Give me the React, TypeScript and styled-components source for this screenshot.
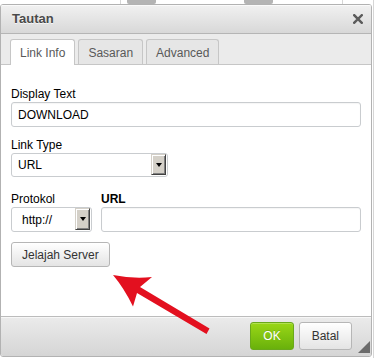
import React from "react";
import styled, { createGlobalStyle } from "styled-components";

const Global = createGlobalStyle`
  html, body { margin: 0; padding: 0; background: #fff; }
  body { font-family: "Liberation Sans", Arial, sans-serif; font-size: 12px; color: #000; }
  * { box-sizing: border-box; }
`;

const Page = styled.div`
  position: relative;
  width: 376px;
  height: 358px;
  overflow: hidden;
  background: #fff;
  padding-top: 4px;
`;

/* background page content peeking out behind the dialog */
const Backdrop = styled.div`
  position: absolute;
  inset: 0;
  z-index: 0;
`;

const BackBlock = styled.div<{ $x: number; $w: number }>`
  position: absolute;
  top: 0;
  left: ${(p) => p.$x}px;
  width: ${(p) => p.$w}px;
  height: 4px;
  background: #b4b4b4;
  border-radius: 0 0 2px 2px;
`;

const BackLine = styled.div<{ $x: number; $top: number; $h: number }>`
  position: absolute;
  left: ${(p) => p.$x}px;
  top: ${(p) => p.$top}px;
  width: 1px;
  height: ${(p) => p.$h}px;
  background: #d6d6d6;
`;

const Dialog = styled.div`
  position: relative;
  z-index: 1;
  width: 372px;
  height: 353px;
  border: 1px solid #b2b2b2;
  border-radius: 3px;
  display: flex;
  flex-direction: column;
  background: #fff;
  overflow: hidden;
`;

const TitleBar = styled.div`
  height: 29px;
  flex: none;
  display: flex;
  align-items: center;
  justify-content: space-between;
  padding: 0 8px 0 11px;
  background: linear-gradient(#f1f1f1, #d8d8d8);
  border-bottom: 1px solid #b5b5b5;
  box-shadow: inset 0 1px 0 #fafafa;
`;

const Title = styled.span`
  font-size: 13px;
  font-weight: bold;
  line-height: 28px;
  color: #4a4a4a;
  text-shadow: 0 1px 0 rgba(255, 255, 255, 0.75);
`;

const CloseIcon = styled.svg`
  width: 10px;
  height: 10px;
  display: block;
`;

const TabStrip = styled.div`
  height: 31px;
  flex: none;
  display: flex;
  align-items: flex-start;
  gap: 3px;
  padding: 5px 0 0 9px;
  background: #ebebeb;
  border-bottom: 1px solid #c6c6c6;
`;

const Tab = styled.div<{ $active?: boolean }>`
  position: relative;
  height: ${(p) => (p.$active ? 26 : 25)}px;
  padding: 2px 9px 0;
  line-height: 22px;
  font-size: 12px;
  color: #595959;
  border: 1px solid #c6c6c6;
  border-bottom: none;
  border-radius: 3px 3px 0 0;
  background: ${(p) => (p.$active ? "#fff" : "#e6e6e6")};
  z-index: ${(p) => (p.$active ? 2 : 1)};
`;

const Body = styled.div`
  flex: 1;
  padding: 21px 10px 0;
  background: #fff;
  border-bottom: 1px solid #bcbcbc;
  display: flex;
  flex-direction: column;
  align-items: flex-start;
`;

const Field = styled.div<{ $mt?: number; $w?: string; $grow?: boolean }>`
  margin-top: ${(p) => p.$mt ?? 0}px;
  width: ${(p) => p.$w ?? "100%"};
  flex: ${(p) => (p.$grow ? 1 : "none")};
  display: flex;
  flex-direction: column;
`;

const Label = styled.label<{ $bold?: boolean }>`
  display: block;
  font-size: 12px;
  line-height: 16px;
  color: #000;
  font-weight: ${(p) => (p.$bold ? "bold" : "normal")};
`;

const TextInput = styled.input`
  width: 100%;
  height: 25px;
  border: 1px solid #c9cccf;
  border-radius: 3px;
  padding: 0 6px;
  font-family: "Liberation Sans", Arial, sans-serif;
  font-size: 12px;
  color: #000;
  background: #fff;
  box-shadow: inset 0 1px 1px rgba(0, 0, 0, 0.04);
  outline: none;
`;

const SelectBox = styled.div<{ $w: number; $h: number; $indent: number }>`
  width: ${(p) => p.$w}px;
  height: ${(p) => p.$h}px;
  border: 1px solid #c9cccf;
  border-radius: 3px;
  background: #fff;
  display: flex;
  align-items: stretch;
  padding: 0 1px 0 ${(p) => p.$indent}px;
  font-size: 12px;
  color: #000;
`;

const SelectValue = styled.span`
  flex: 1;
  display: flex;
  align-items: center;
`;

const DropButton = styled.span`
  width: 15px;
  margin: 0 0 1px;
  display: flex;
  align-items: center;
  justify-content: center;
  background: #d4d0c8;
  border: 1px solid;
  border-color: #d4d0c8 #404040 #404040 #d4d0c8;
  box-shadow: inset 1px 1px 0 #fff, inset -1px -1px 0 #808080;
`;

const DownTriangle = styled.span`
  width: 0;
  height: 0;
  border-left: 3.5px solid transparent;
  border-right: 3.5px solid transparent;
  border-top: 4px solid #000;
`;

const Row = styled.div<{ $mt: number }>`
  margin-top: ${(p) => p.$mt}px;
  width: 100%;
  display: flex;
  gap: 9px;
`;

const Button = styled.button<{ $variant?: "ok" | "plain"; $h: number }>`
  height: ${(p) => p.$h}px;
  padding: 0 12px;
  font-family: "Liberation Sans", Arial, sans-serif;
  font-size: 12px;
  border-radius: 3px;
  cursor: pointer;
  color: ${(p) => (p.$variant === "ok" ? "#fff" : "#333")};
  border: 1px solid ${(p) => (p.$variant === "ok" ? "#6aa91b" : "#b6b6b6")};
  background: ${(p) =>
    p.$variant === "ok"
      ? "linear-gradient(#9ad717, #69b10b)"
      : "linear-gradient(#ffffff, #e4e4e4)"};
  box-shadow: ${(p) =>
    p.$variant === "ok"
      ? "inset 0 1px 0 rgba(255,255,255,0.25)"
      : "inset 0 1px 0 #fff"};
  text-shadow: ${(p) =>
    p.$variant === "ok" ? "0 -1px 0 rgba(0,0,0,0.15)" : "none"};
`;

const BrowseButton = styled(Button)`
  margin-top: 10px;
  padding: 0 10px;
`;

const Footer = styled.div`
  position: relative;
  height: 39px;
  flex: none;
  display: flex;
  justify-content: flex-end;
  align-items: flex-start;
  gap: 5px;
  padding: 5px 19px 0 0;
  background: linear-gradient(#ebebeb, #d5d5d5);
  box-shadow: inset 0 1px 0 #f7f7f7;
`;

const ResizeGrip = styled.div`
  position: absolute;
  right: 1px;
  bottom: 3px;
  width: 0;
  height: 0;
  border-left: 12px solid transparent;
  border-bottom: 12px solid #6b6b6b;
`;

const ArrowOverlay = styled.svg`
  position: absolute;
  left: 0;
  top: 0;
  z-index: 3;
  pointer-events: none;
`;

function Select({ value, width, height, indent }: { value: string; width: number; height: number; indent: number }) {
  return (
    <SelectBox $w={width} $h={height} $indent={indent}>
      <SelectValue>{value}</SelectValue>
      <DropButton>
        <DownTriangle />
      </DropButton>
    </SelectBox>
  );
}

export default function App() {
  return (
    <>
      <Global />
      <Page>
        <Backdrop>
          <BackLine $x={120} $top={0} $h={4} />
          <BackBlock $x={127} $w={29} />
          <BackBlock $x={244} $w={29} />
          <BackLine $x={342} $top={0} $h={4} />
          <BackLine $x={373} $top={0} $h={358} />
        </Backdrop>
        <Dialog>
          <TitleBar>
            <Title>Tautan</Title>
            <CloseIcon viewBox="0 0 10 10">
              <path d="M1.2 1.2 L8.8 8.8 M8.8 1.2 L1.2 8.8" stroke="#5c5c5c" strokeWidth="2.4" strokeLinecap="square" />
            </CloseIcon>
          </TitleBar>
          <TabStrip>
            <Tab $active>Link Info</Tab>
            <Tab>Sasaran</Tab>
            <Tab>Advanced</Tab>
          </TabStrip>
          <Body>
            <Field>
              <Label>Display Text</Label>
              <TextInput defaultValue="DOWNLOAD" />
            </Field>
            <Field $mt={10} $w="auto">
              <Label>Link Type</Label>
              <Select value="URL" width={157} height={24} indent={6} />
            </Field>
            <Row $mt={14}>
              <Field $w="81px">
                <Label>Protokol</Label>
                <Select value="http://" width={81} height={25} indent={10} />
              </Field>
              <Field $w="auto" $grow>
                <Label $bold>URL</Label>
                <TextInput />
              </Field>
            </Row>
            <BrowseButton $h={25}>Jelajah Server</BrowseButton>
          </Body>
          <Footer>
            <Button $variant="ok" $h={28}>OK</Button>
            <Button $h={28}>Batal</Button>
            <ResizeGrip />
          </Footer>
        </Dialog>
        <ArrowOverlay width="376" height="358" viewBox="0 0 376 358">
          <path
            d="M113 275 Q133 279 152 277 L140 287 L209.5 328.5 L206.5 334 L137 293 L133 306.5 Q124 288 113 275 Z"
            fill="#e3101f"
          />
        </ArrowOverlay>
      </Page>
    </>
  );
}
